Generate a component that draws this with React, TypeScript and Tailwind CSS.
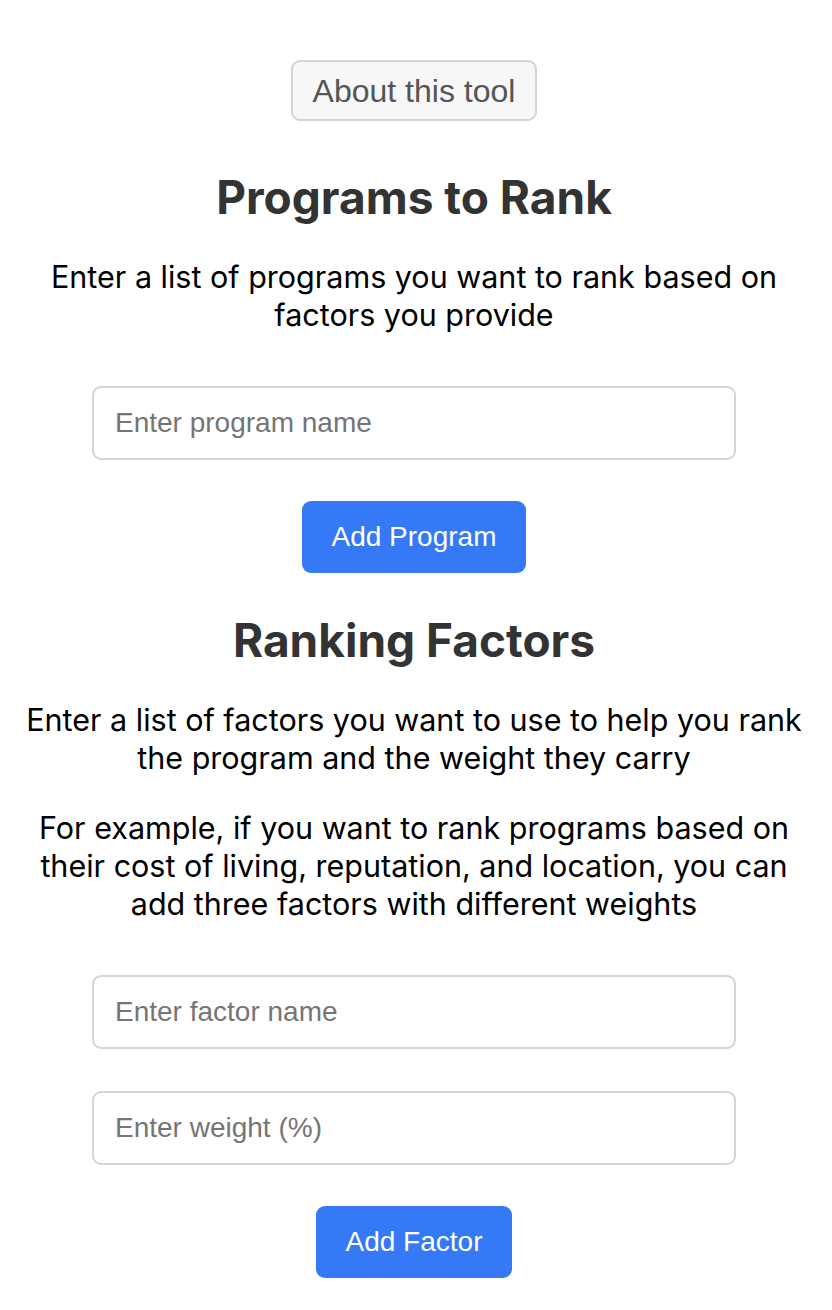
import React from "react";

export default function App() {
  return (
    <div className="min-h-[1310px] w-full bg-white flex flex-col items-center pl-[18px] pr-[22px] text-center font-['Inter',sans-serif]">
      <button className="mt-[60px] h-[61px] px-[20px] rounded-[9px] border-2 border-[#d4d4d4] bg-[#f7f7f7] text-[#555555] text-[32px] leading-none font-['Liberation_Sans',Arial,sans-serif]">
        About this tool
      </button>

      <h1 className="mt-[49px] text-[46px] leading-[54px] font-bold text-[#333333]">Programs to Rank</h1>
      <p className="mt-[34px] text-[30.5px] leading-[38px] text-black">
        Enter a list of programs you want to rank based on factors you provide
      </p>

      <input
        className="mt-[52px] w-[644px] h-[74px] rounded-[9px] border-2 border-[#d4d4d4] px-[21px] text-[28px] font-['Liberation_Sans',Arial,sans-serif] placeholder:text-[#757575] outline-none"
        placeholder="Enter program name"
      />
      <button className="mt-[41px] h-[72px] w-[224px] rounded-[9px] bg-[#3579f6] text-white text-[28px] font-['Liberation_Sans',Arial,sans-serif]">
        Add Program
      </button>

      <h2 className="mt-[40px] text-[46px] leading-[54px] font-bold text-[#333333]">Ranking Factors</h2>
      <p className="mt-[34px] text-[30.5px] leading-[38px] text-black">
        Enter a list of factors you want to use to help you rank the program and the weight they carry
      </p>
      <p className="mt-[32px] text-[30.5px] leading-[38px] text-black">
        For example, if you want to rank programs based on their cost of living, reputation, and location, you can add three factors with different weights
      </p>

      <input
        className="mt-[52px] w-[644px] h-[74px] rounded-[9px] border-2 border-[#d4d4d4] px-[21px] text-[28px] font-['Liberation_Sans',Arial,sans-serif] placeholder:text-[#757575] outline-none"
        placeholder="Enter factor name"
      />
      <input
        className="mt-[42px] w-[644px] h-[74px] rounded-[9px] border-2 border-[#d4d4d4] px-[21px] text-[28px] font-['Liberation_Sans',Arial,sans-serif] placeholder:text-[#757575] outline-none"
        placeholder="Enter weight (%)"
      />
      <button className="mt-[41px] h-[72px] w-[196px] rounded-[9px] bg-[#3579f6] text-white text-[28px] font-['Liberation_Sans',Arial,sans-serif]">
        Add Factor
      </button>
    </div>
  );
}
